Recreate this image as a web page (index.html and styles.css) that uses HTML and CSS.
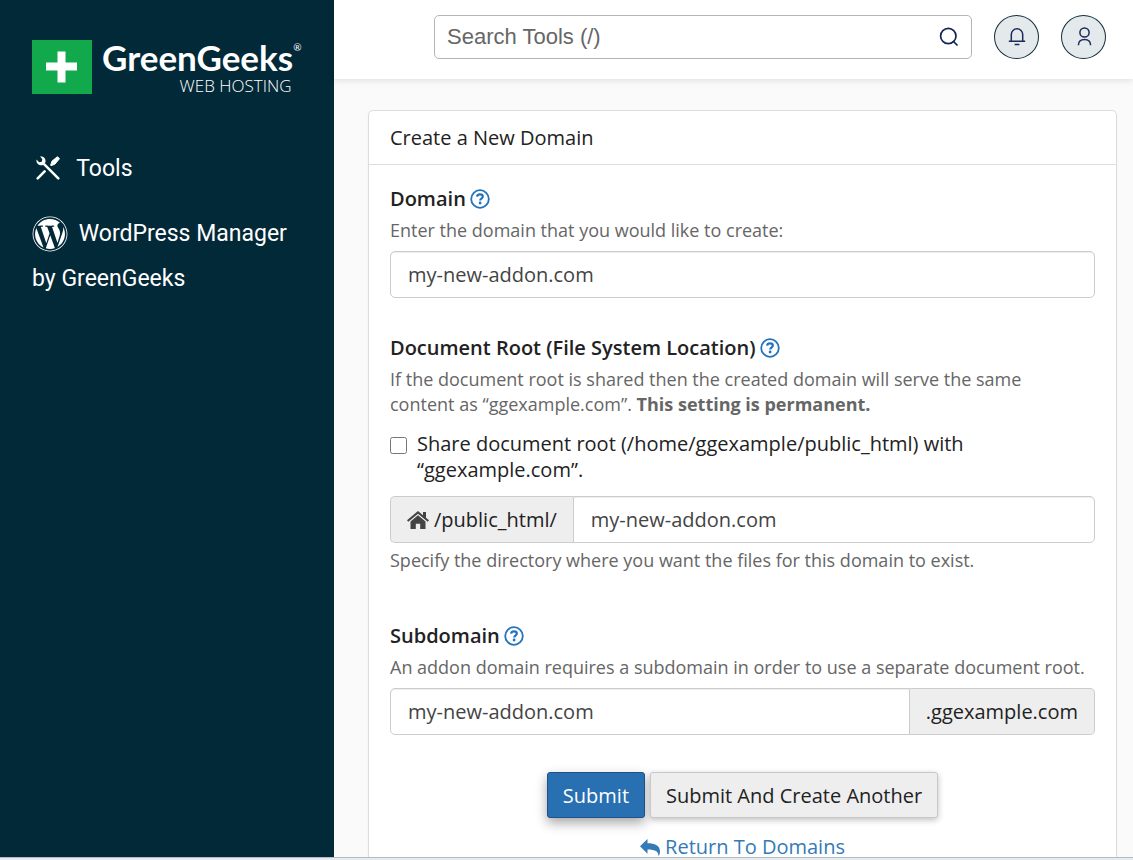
FILE: index.html
```html
<!DOCTYPE html>
<html lang="en">
<head>
    <meta charset="UTF-8">
    <meta name="viewport" content="width=device-width, initial-scale=1.0">
    <title>Create a New Domain</title>
    <link rel="stylesheet" href="styles.css">
</head>
<body>
    <!-- shared question mark icon -->
    <svg class="sprite" aria-hidden="true">
        <symbol id="help" viewBox="0 0 20 20">
            <circle cx="10" cy="10" r="8.8" fill="none" stroke="currentColor" stroke-width="1.8"/>
            <path d="M7.1 7.7c.2-1.5 1.300-2.300 2.900-2.300 1.600 0 2.800.9 2.800 2.200 0 2-2.600 1.900-2.600 3.800" fill="none" stroke="currentColor" stroke-width="2.200"/>
            <circle cx="10.100" cy="14" r="1.400" fill="currentColor"/>
        </symbol>
    </svg>

    <div class="layout">
        <aside class="sidebar">
            <a class="logo" href="#" aria-label="GreenGeeks Web Hosting">
                <svg class="logo-mark" viewBox="0 0 60 54">
                    <path d="M0 0h60v54H0z" fill="#12a84c"/>
                    <path d="M14 22.500h11.500V11.500h8v11H45v8H33.500v12h-8v-12H14z" fill="#fff"/>
                </svg>
                <span class="logo-text">
                    <span class="logo-name">GreenGeeks<span class="reg">®</span></span>
                    <span class="logo-sub">WEB HOSTING</span>
                </span>
            </a>
            <nav class="menu">
                <a class="menu-item" href="#">
                    <svg class="icon-tools" viewBox="0 0 24 24" fill="#fff" stroke="#fff">
                        <path d="M8.300 8.300l14 14" stroke-width="2.600" stroke-linecap="round"/>
                        <path d="M4 .5C7.500-.3 10.400 3 9.400 6.300L7.200 9C3.500 10.300-.2 7.300.5 3.600L3.100 6.200 5.800 5.700 6.300 3z" stroke="none"/>
                        <path d="M1.700 22.300l6.900-6.900" stroke-width="2.600" stroke-linecap="round"/>
                        <path d="M14.600 9.200l1.500-4.200L21.500.7l2 2L19 8.100l-3.900 1.600z" stroke-width="1" stroke-linejoin="round"/>
                    </svg>
                    Tools
                </a>
                <a class="menu-item" href="#">
                    <svg class="icon-wp" viewBox="0 0 512 512" fill="#fff">
                        <path d="M61.7 169.4l101.5 278C92.2 413 43.3 340.2 43.3 256c0-30.9 6.6-60.1 18.4-86.6zm337.9 75.9c0-26.3-9.4-44.5-17.5-58.7-10.8-17.5-20.9-32.4-20.9-49.9 0-19.6 14.8-37.8 35.7-37.8.9 0 1.8.1 2.8.2-37.9-34.7-88.3-55.9-143.7-55.9-74.3 0-139.7 38.1-177.8 95.9 5 .2 9.7.3 13.7.3 22.2 0 56.7-2.7 56.7-2.7 11.5-.7 12.8 16.2 1.4 17.5 0 0-11.5 1.3-24.3 2l77.5 230.4L249.8 247l-33.1-90.8c-11.5-.7-22.3-2-22.3-2-11.5-.7-10.1-18.2 1.3-17.5 0 0 35.1 2.7 56 2.7 22.2 0 56.7-2.7 56.7-2.7 11.5-.7 12.8 16.2 1.4 17.5 0 0-11.5 1.3-24.3 2l76.9 228.7 21.2-70.9c9-29.4 16-50.5 16-68.7zm-139.9 29.3l-63.8 185.5c19.1 5.6 39.2 8.7 60.1 8.7 24.8 0 48.5-4.3 70.6-12.1-.6-.9-1.1-1.9-1.5-2.9l-65.4-179.2zm183-120.7c.9 6.8 1.4 14 1.4 21.900 0 21.600-4 45.800-16.200 76.200l-65 187.900C426.200 403 468.700 334.500 468.700 256c0-37-9.400-71.800-26-102.100zM504 256c0 136.800-111.300 248-248 248C119.200 504 8 392.700 8 256 8 119.200 119.200 8 256 8c136.700 0 248 111.200 248 248zm-11.400 0c0-130.500-106.200-236.600-236.600-236.600C125.500 19.400 19.400 125.500 19.400 256S125.600 492.600 256 492.600c130.500 0 236.600-106.100 236.600-236.600z"/>
                    </svg>
                    WordPress Manager by GreenGeeks
                </a>
            </nav>
        </aside>

        <div class="content">
            <header class="topbar">
                <form class="search">
                    <input type="text" placeholder="Search Tools (/)" aria-label="Search Tools">
                    <button type="submit" aria-label="Search">
                        <svg viewBox="0 0 20 20" fill="none" stroke="#14235c" stroke-width="1.700">
                            <circle cx="9.300" cy="9" r="7.700"/>
                            <path d="M14 14l4.500 4.500"/>
                        </svg>
                    </button>
                </form>
                <button class="round-btn" type="button" aria-label="Notifications">
                    <svg viewBox="0 0 20 20" fill="none" stroke="#1b2a59" stroke-width="1.500">
                        <path d="M4.300 14V7.500a5.700 5.700 0 0 1 11.400 0V14M1.800 14.200h16.400M7.600 17.400h4.800"/>
                    </svg>
                </button>
                <button class="round-btn" type="button" aria-label="Account">
                    <svg viewBox="0 0 20 20" fill="none" stroke="#1b2a59" stroke-width="1.500">
                        <circle cx="10.500" cy="5.500" r="4.600"/>
                        <path d="M4.400 18.200c0-3.700 2.500-5.800 6.100-5.800s6.100 2.100 6.100 5.800"/>
                    </svg>
                </button>
            </header>

            <main class="main">
                <form class="panel">
                    <h1 class="panel-title">Create a New Domain</h1>
                    <div class="panel-body">
                        <section class="field">
                            <div class="label-row">
                                <label for="domain">Domain</label>
                                <button class="help" type="button" aria-label="Help"><svg><use href="#help"/></svg></button>
                            </div>
                            <p class="hint">Enter the domain that you would like to create:</p>
                            <div class="input-group">
                                <input type="text" id="domain" value="my-new-addon.com">
                            </div>
                        </section>

                        <section class="field field-root">
                            <div class="label-row">
                                <label for="root">Document Root (File System Location)</label>
                                <button class="help" type="button" aria-label="Help"><svg><use href="#help"/></svg></button>
                            </div>
                            <p class="hint">If the document root is shared then the created domain will serve the same content as “ggexample.com”. <strong>This setting is permanent.</strong></p>
                            <div class="check">
                                <input type="checkbox" id="share">
                                <label for="share">Share document root (/home/ggexample/public_html) with “ggexample.com”.</label>
                            </div>
                            <div class="input-group">
                                <span class="addon">
                                    <svg class="icon-home" viewBox="0 0 22 18" fill="#444">
                                        <path d="M11 0L0 9.300l1.300 1.500L11 2.700l9.700 8.100L22 9.300l-3-2.600V1h-3v3.200z"/>
                                        <path d="M11 4.200L3.500 10.500V18h5.300v-5.300h4.400V18h5.300v-7.500z"/>
                                    </svg>
                                    /public_html/
                                </span>
                                <input type="text" id="root" value="my-new-addon.com">
                            </div>
                            <p class="hint hint-below">Specify the directory where you want the files for this domain to exist.</p>
                        </section>

                        <section class="field">
                            <div class="label-row">
                                <label for="sub">Subdomain</label>
                                <button class="help" type="button" aria-label="Help"><svg><use href="#help"/></svg></button>
                            </div>
                            <p class="hint">An addon domain requires a subdomain in order to use a separate document root.</p>
                            <div class="input-group">
                                <input type="text" id="sub" value="my-new-addon.com">
                                <span class="addon addon-right">.ggexample.com</span>
                            </div>
                        </section>

                        <div class="actions">
                            <button class="btn btn-primary" type="submit">Submit</button>
                            <button class="btn" type="submit">Submit And Create Another</button>
                        </div>
                        <a class="return" href="#">
                            <svg viewBox="0 0 20 17" fill="#337ab7">
                                <path d="M7.500 0v4.200c7.500 0 12.500 2.300 12.500 8.300 0 2-.6 3.500-1.600 4.500.3-4.600-2.900-6.600-10.900-6.600v4.300L0 7.300z"/>
                            </svg>
                            Return To Domains
                        </a>
                    </div>
                </form>
            </main>
        </div>
    </div>
    <div class="statusbar"></div>
</body>
</html>
```

FILE: styles.css
```css
* {
    box-sizing: border-box;
}

body {
    margin: 0;
    height: 100vh;
    display: flex;
    flex-direction: column;
    overflow: hidden;
    font-family: "Open Sans", "Noto Sans", sans-serif;
    font-size: 20px;
    color: #222;
    background: #fafafa;
}

a {
    text-decoration: none;
}

button, input {
    font: inherit;
    color: inherit;
}

.sprite {
    display: none;
}

.layout {
    flex: 1;
    min-height: 0;
    display: flex;
    overflow: hidden;
}

.statusbar {
    flex: none;
    height: 3px;
    border-top: 1px solid #b3bcc4;
    background: #e6ebf0;
}

/* sidebar */
.sidebar {
    flex: none;
    width: 334px;
    padding: 40px 32px;
    background: #022938;
}

.logo {
    display: flex;
    gap: 10px;
    color: #fff;
}

.logo-mark {
    flex: none;
    width: 60px;
    height: 54px;
}

.logo-text {
    display: flex;
    flex-direction: column;
    gap: 2px;
}

.logo-name {
    display: flex;
    font-family: Lato, sans-serif;
    font-weight: 700;
    font-size: 35px;
    line-height: 34px;
    white-space: nowrap;
}

.logo-name .reg {
    font-size: 10px;
    font-weight: 400;
    line-height: 14px;
}

.logo-sub {
    padding-right: 10px;
    font-size: 17px;
    font-weight: 300;
    line-height: 20px;
    text-align: right;
}

.menu {
    margin-top: 50px;
    font-family: Roboto, sans-serif;
    font-size: 23px;
    line-height: 45px;
}

.menu-item {
    display: block;
    margin-bottom: 20px;
    color: #fff;
}

.icon-tools {
    width: 24px;
    height: 24px;
    margin: 0 11px 0 4px;
    vertical-align: -4px;
}

.icon-wp {
    width: 36px;
    height: 36px;
    margin-right: 5px;
    vertical-align: -11px;
}

/* top bar */
.content {
    flex: 1;
    min-width: 0;
    display: flex;
    flex-direction: column;
}

.topbar {
    flex: none;
    display: flex;
    gap: 22px;
    padding: 15px 27px 20px 100px;
    background: #fff;
    box-shadow: 0 2px 6px rgba(0, 0, 0, 0.1);
}

.search {
    flex: 1;
    height: 44px;
    display: flex;
    border: 1px solid #b1b6bb;
    border-radius: 5px;
}

.search input {
    flex: 1;
    min-width: 0;
    padding: 0 12px;
    border: none;
    outline: none;
    background: none;
    font-family: "Liberation Sans", Arial, sans-serif;
    font-size: 22px;
}

.search input::placeholder {
    color: #666;
    opacity: 1;
}

.search button {
    display: flex;
    align-items: center;
    padding: 0 12px;
    border: none;
    background: none;
}

.search svg {
    width: 20px;
    height: 20px;
}

.round-btn {
    display: flex;
    align-items: center;
    justify-content: center;
    width: 45px;
    height: 44px;
    padding: 0;
    border: 1px solid #14303f;
    border-radius: 50%;
    background: #e4e9eb;
}

.round-btn svg {
    width: 20px;
    height: 20px;
}

/* form panel */
.main {
    padding: 31px 16px 0 34px;
}

.panel {
    border: 1px solid #ddd;
    border-radius: 5px;
    background: #fff;
    box-shadow: 0 1px 2px rgba(0, 0, 0, 0.05);
}

.panel-title {
    margin: 0;
    padding: 13px 21px;
    border-bottom: 1px solid #ddd;
    font-size: 20px;
    font-weight: 400;
    line-height: 27px;
}

.panel-body {
    padding: 20px 21px 10px;
}

.field {
    margin-bottom: 37px;
}

.field:first-child {
    margin-bottom: 36px;
}

.field-root {
    margin-bottom: 49px;
}

.label-row {
    display: flex;
    align-items: center;
    gap: 4px;
    line-height: 28px;
}

.label-row label {
    font-weight: 600;
}

.help {
    display: flex;
    padding: 0;
    border: none;
    background: none;
    color: #2272bd;
}

.help svg {
    width: 20px;
    height: 20px;
}

.hint {
    margin: 5px 0 8px;
    padding-right: 6px;
    font-size: 18px;
    line-height: 25px;
    color: #666;
}

.hint-below {
    margin: 5px 0 0;
}

.check {
    display: flex;
    gap: 10px;
    margin: 14px 0 13px;
    line-height: 26px;
}

.check input {
    flex: none;
    width: 17px;
    height: 17px;
    margin: 6px 0 0;
}

.input-group {
    display: flex;
    height: 47px;
}

.input-group input {
    flex: 1;
    min-width: 0;
    padding: 0 17px;
    border: 1px solid #ccc;
    border-radius: 5px;
    background: #fff;
    box-shadow: inset 0 1px 1px rgba(0, 0, 0, 0.075);
    color: #444;
}

.addon {
    display: flex;
    align-items: center;
    gap: 5px;
    padding: 0 16px;
    border: 1px solid #ccc;
    border-right: none;
    border-radius: 5px 0 0 5px;
    background: #eee;
}

.addon + input {
    border-radius: 0 5px 5px 0;
}

.input-group input:not(:last-child) {
    border-radius: 5px 0 0 5px;
}

.addon-right {
    border-right: 1px solid #ccc;
    border-left: none;
    border-radius: 0 5px 5px 0;
}

.icon-home {
    width: 22px;
    height: 18px;
}

.actions {
    display: flex;
    justify-content: center;
    gap: 5px;
}

.btn {
    height: 46px;
    padding: 0 15px;
    border: 1px solid #c8c8c8;
    border-radius: 3px;
    background: #eee;
    box-shadow: 0 2px 6px rgba(0, 0, 0, 0.25);
}

.btn-primary {
    border-color: #1c5288;
    background: #2870b2;
    box-shadow: 0 5px 12px rgba(0, 0, 0, 0.35);
    color: #fff;
}

.return {
    display: flex;
    align-items: center;
    justify-content: center;
    gap: 5px;
    margin-top: 15px;
    line-height: 28px;
    color: #337ab7;
}

.return svg {
    width: 20px;
    height: 17px;
}
```
